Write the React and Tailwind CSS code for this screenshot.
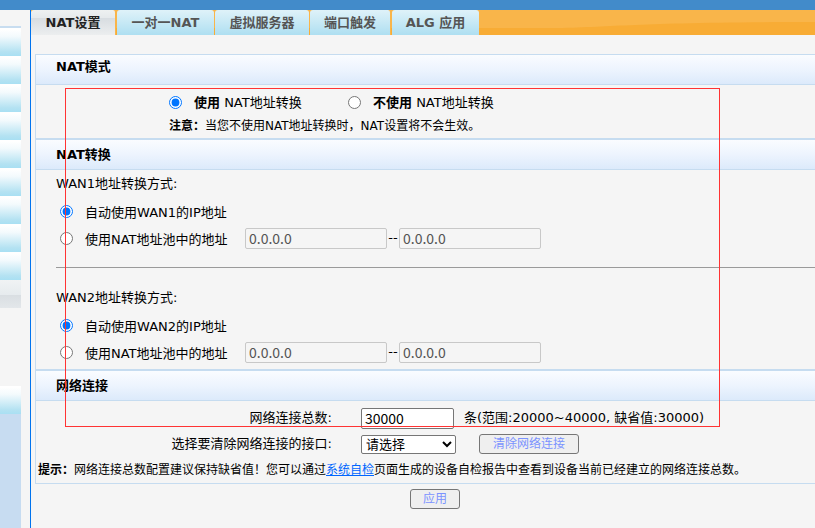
import React, { useState } from "react";

const tabs = [
  { label: "NAT设置", size: "w-[85px] border-r" },
  { label: "一对一NAT", size: "w-[97px]" },
  { label: "虚拟服务器", size: "w-[94px]" },
  { label: "端口触发", size: "w-[81px] border-r" },
  { label: "ALG 应用", size: "w-[87px]" },
];

const menuRows = Array.from({ length: 9 });

const MenuRow = () => (
  <div className="h-7 bg-[linear-gradient(#ffffff_5%,#f3fafd_30%,#b4e2f2_85%,#a9e0f3_100%)]"></div>
);

const Sidebar = () => (
  <aside className="flex w-[21px] shrink-0 flex-col pt-4">
    <div className="h-0.5 bg-[#c8ddf0]"></div>
    {menuRows.map((_, index) => (
      <MenuRow key={index} />
    ))}
    <div className="h-7 bg-[linear-gradient(#f0f3f4_0%,#e6ebee_52%,#d9dee2_54%,#e3e7ea_100%)]"></div>
    <div className="h-[78px]"></div>
    <MenuRow />
    <div className="flex-1 bg-[#c7dcf1]"></div>
  </aside>
);

const TabBar = ({ active, onSelect }) => (
  <nav className="relative flex h-[25px] gap-px bg-[#f9b54a]">
    <svg
      className="absolute inset-0 h-full w-full"
      viewBox="0 0 784 25"
      preserveAspectRatio="none"
    >
      <path
        d="M0 18 H520 C 590 17, 600 12, 784 12 V25 H0 Z"
        fill="#f8ac35"
      />
    </svg>
    {tabs.map((tab, index) => (
      <button
        key={tab.label}
        type="button"
        onClick={() => onSelect(index)}
        className={`relative h-full rounded-t-[3px] border-[#f9b54a] whitespace-nowrap text-[13px] font-bold ${
          tab.size
        } ${
          active === index
            ? "bg-[linear-gradient(#eef1f1_0%,#e6eaec_30%,#d8dde1_34%,#eceeef_100%)] text-[#222]"
            : "bg-linear-to-b from-[#dff2f9] to-[#aedff1] text-[#555]"
        }`}
      >
        {tab.label}
      </button>
    ))}
  </nav>
);

const SectionTitle = ({ children, first }) => (
  <h2
    className={`border-b border-[#c6dcf0] bg-linear-to-b from-[#fafcff] via-[#edf4fe] via-50% to-[#dceafb] pl-5 text-[13px] font-bold ${
      first ? "h-[30px] leading-6" : "h-8 border-t-2 leading-[30px]"
    }`}
  >
    {children}
  </h2>
);

const Radio = (props) => (
  <input type="radio" className="m-0 size-[13px] shrink-0" {...props} />
);

const WanSettings = ({ wan }) => {
  const [mode, setMode] = useState("auto");
  const [range, setRange] = useState({ from: "0.0.0.0", to: "0.0.0.0" });

  const addressClass =
    "h-[21px] w-[142px] rounded-xs border border-[#c8c8c8] px-[3px] font-['Noto_Sans_CJK_SC',sans-serif] text-[14px] text-[#545454]";

  return (
    <fieldset>
      <legend className="h-[27px] pl-5 leading-7">
        WAN{wan}地址转换方式:
      </legend>
      <div className="flex h-7 items-center gap-3 pl-6">
        <Radio
          id={`wan${wan}-auto`}
          name={`wan${wan}`}
          checked={mode === "auto"}
          onChange={() => setMode("auto")}
        />
        <label htmlFor={`wan${wan}-auto`} className="pt-1">
          自动使用WAN{wan}的IP地址
        </label>
      </div>
      <div className="flex h-[26px] items-center pl-6">
        <Radio
          id={`wan${wan}-pool`}
          name={`wan${wan}`}
          checked={mode === "pool"}
          onChange={() => setMode("pool")}
        />
        <label htmlFor={`wan${wan}-pool`} className="ml-3 w-40 pt-1">
          使用NAT地址池中的地址
        </label>
        <input
          type="text"
          aria-label={`WAN${wan} 起始地址`}
          disabled={mode === "auto"}
          value={range.from}
          onChange={(e) => setRange({ ...range, from: e.target.value })}
          className={addressClass}
        />
        <span className="w-3 text-center">--</span>
        <input
          type="text"
          aria-label={`WAN${wan} 结束地址`}
          disabled={mode === "auto"}
          value={range.to}
          onChange={(e) => setRange({ ...range, to: e.target.value })}
          className={addressClass}
        />
      </div>
    </fieldset>
  );
};

const App = () => {
  const [activeTab, setActiveTab] = useState(0);
  const [natEnabled, setNatEnabled] = useState(true);
  const [total, setTotal] = useState("30000");

  const buttonClass =
    "h-5 rounded-[3px] border border-[#767676] bg-[#efefef] text-xs leading-none text-[#7b93ff]";

  return (
    <div className="flex min-h-screen flex-col overflow-x-hidden bg-[#f5f5f5] font-['DejaVu_Sans','Noto_Sans_CJK_SC',sans-serif] text-[13px] text-black">
      <header className="h-2.5 bg-[#428bca]"></header>
      <div className="flex flex-1">
        <Sidebar />
        <main className="ml-[9px] min-w-0 flex-1 border-l border-[#0073ee]">
          <TabBar active={activeTab} onSelect={setActiveTab} />

          <div className="relative mt-[19px] ml-1 border-y border-l border-[#c6dcf0]">
            {/* NAT mode */}
            <SectionTitle first>NAT模式</SectionTitle>
            <div className="h-[53px] pt-[5px]">
              <div className="flex h-6 items-center pl-[133px]">
                <Radio
                  id="nat-on"
                  name="nat"
                  checked={natEnabled}
                  onChange={() => setNatEnabled(true)}
                />
                <label htmlFor="nat-on" className="ml-3 w-[154px] pt-0.5">
                  <b>使用</b> NAT地址转换
                </label>
                <Radio
                  id="nat-off"
                  name="nat"
                  checked={!natEnabled}
                  onChange={() => setNatEnabled(false)}
                />
                <label htmlFor="nat-off" className="ml-3 pt-0.5">
                  <b>不使用</b> NAT地址转换
                </label>
              </div>
              <p className="pl-[133px] text-xs leading-6">
                <b>注意：</b>当您不使用NAT地址转换时，NAT设置将不会生效。
              </p>
            </div>

            {/* NAT translation */}
            <SectionTitle>NAT转换</SectionTitle>
            <div className="h-[199px]">
              <WanSettings wan={1} />
              <hr className="my-4 ml-5 border-[#9a9a9a]" />
              <WanSettings wan={2} />
            </div>

            {/* Network connections */}
            <SectionTitle>网络连接</SectionTitle>
            <div className="pt-1">
              <div className="flex h-[26px] items-center">
                <label htmlFor="total" className="w-[296px] text-right">
                  网络连接总数:
                </label>
                <input
                  id="total"
                  type="text"
                  value={total}
                  onChange={(e) => setTotal(e.target.value)}
                  className="ml-[29px] h-[21px] w-[93px] rounded-xs border border-[#767676] bg-white px-[3px] font-['Noto_Sans_CJK_SC',sans-serif] text-[14px]"
                />
                <span className="ml-2.5 whitespace-nowrap">
                  条(范围:20000~40000, 缺省值:30000)
                </span>
              </div>
              <div className="flex h-[26px] items-center">
                <label htmlFor="port" className="w-[296px] text-right">
                  选择要清除网络连接的接口:
                </label>
                <select
                  id="port"
                  className="ml-[29px] h-[19px] w-[95px] rounded-xs border border-[#767676] bg-white text-[13px]"
                >
                  <option>请选择</option>
                  <option>WAN1</option>
                  <option>WAN2</option>
                </select>
                <button type="button" className={`ml-[23px] w-[100px] ${buttonClass}`}>
                  清除网络连接
                </button>
              </div>
              <p className="h-[26px] pl-0.5 text-xs leading-[26px] whitespace-nowrap">
                <b>提示：</b>网络连接总数配置建议保持缺省值！您可以通过
                <a href="#check" className="text-[#0066ff] underline">
                  系统自检
                </a>
                页面生成的设备自检报告中查看到设备当前已经建立的网络连接总数。
              </p>
            </div>

            {/* Red frame around the settings */}
            <div className="pointer-events-none absolute top-[33px] left-[29px] h-[339px] w-[655px] border border-solid border-[#ff3333]"></div>
          </div>

          <div className="pt-[5px] pl-[379px]">
            <button type="button" className={`w-[50px] ${buttonClass}`}>
              应用
            </button>
          </div>
        </main>
      </div>
    </div>
  );
};

export default App;
